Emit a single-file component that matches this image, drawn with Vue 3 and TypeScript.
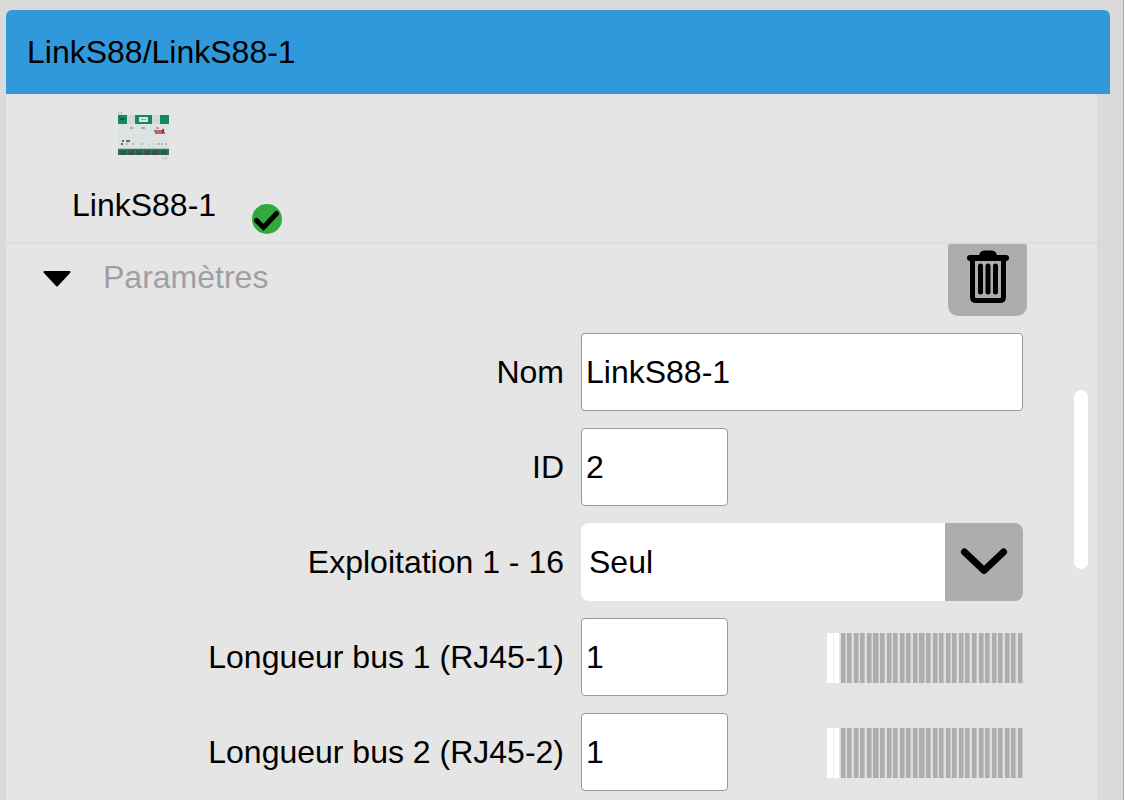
<script setup lang="ts">
import { ref } from 'vue'

interface BusLength {
  id: string
  label: string
  value: number
}

const deviceName = ref('LinkS88-1')
const deviceId = ref('2')
const mode = ref('Seul')
const open = ref(true)
const buses = ref<BusLength[]>([
  { id: 'bus1', label: 'Longueur bus 1 (RJ45-1)', value: 1 },
  { id: 'bus2', label: 'Longueur bus 2 (RJ45-2)', value: 1 },
])
</script>

<template>
  <main class="page">
    <header class="title">
      <h1>LinkS88/LinkS88-1</h1>
    </header>
    <div class="panel">
      <section class="device">
        <svg class="module" viewBox="0 0 52 50" aria-hidden="true">
          <path d="M1.500 5V2h3v3M45.500 46v2.500h4V46" fill="none" stroke="#b9c2c0" />
          <rect x="1" y="5" width="51" height="10" fill="#d4d8d8" />
          <rect x="1" y="5" width="9" height="10" fill="#128a5c" />
          <rect x="3" y="8" width="5" height="2" fill="#075f3f" />
          <rect x="18" y="5" width="17" height="9" fill="#128a5c" />
          <rect x="22" y="7" width="9" height="5" fill="#dce5e2" />
          <rect x="24" y="9" width="5" height="1" fill="#8fa39c" />
          <rect x="43" y="5" width="9" height="10" fill="#128a5c" />
          <rect x="1" y="14" width="51" height="25" fill="#dde2e3" />
          <path d="M13 18h3M24 18h4M39 18h3" stroke="#6d7678" />
          <path d="M37 21h8M38 23h10" stroke="#b83a3a" stroke-width="1.500" />
          <path d="M46 19v4" stroke="#a32626" stroke-width="2" />
          <path d="M5 31h2M9 31h4M4 34h2" stroke="#3d4648" stroke-width="1.5" />
          <path d="M9 34h2M15 34h2M24 34h2M32 34h1M36 34h1M40 34h3M44 34h2M48 34h2" stroke="#8b9496" />
          <rect x="1" y="39" width="51" height="6" fill="#3f4f4b" />
          <path d="M1 39.500h51" stroke="#128a5c" stroke-width="1.500" />
          <path d="M2 39v6M10 39v6M18 39v6M26 39v6M34 39v6M43 39v6M51 39v6" stroke="#128a5c" stroke-width="1.5" />
        </svg>
        <span class="device-name">LinkS88-1</span>
        <svg class="status" viewBox="0 0 30 30" role="img" aria-label="OK">
          <circle cx="15" cy="15" r="15" fill="#31aa3b" />
          <path d="M4.5 16.500l7 7L24.500 9.500" fill="none" stroke="#000" stroke-width="5" stroke-linecap="round" />
        </svg>
      </section>

      <div class="section-head">
        <button class="toggle" type="button" :aria-expanded="open" @click="open = !open">
          <svg class="caret" viewBox="0 0 28 20" aria-hidden="true">
            <path d="M1.5 5h25L14 18.500z" stroke="#000" stroke-linejoin="round" stroke-width="2" />
          </svg>
          <span>Paramètres</span>
        </button>
        <button class="delete" type="button" aria-label="Supprimer">
          <svg viewBox="0 0 44 54" aria-hidden="true">
            <path d="M4 8h36" stroke="#000" stroke-width="6" stroke-linecap="round" />
            <path d="M13 7c0-4 2-6.500 5-6.500h8c3 0 5 2.500 5 6.500z" />
            <path d="M6.500 9v38q0 3.500 3.500 3.500h24q3.500 0 3.500-3.500V9" fill="none" stroke="#000" stroke-width="5" />
            <path d="M14.500 16v26M22 16v26M29.500 16v26" stroke="#000" stroke-width="5" stroke-linecap="round" />
          </svg>
        </button>
      </div>

      <form v-if="open" class="form" @submit.prevent>
        <label for="name">Nom</label>
        <input id="name" v-model="deviceName" class="field" type="text" />

        <label for="ident">ID</label>
        <input id="ident" v-model="deviceId" class="field short" type="text" inputmode="numeric" />

        <label for="mode">Exploitation 1 - 16</label>
        <div class="picker">
          <select id="mode" v-model="mode">
            <option>Seul</option>
          </select>
          <span class="arrow">
            <svg viewBox="0 0 48 28" aria-hidden="true">
              <path d="M4.500 4L24 22.500 43.500 4" fill="none" stroke="#000" stroke-width="7" stroke-linecap="round" stroke-linejoin="round" />
            </svg>
          </span>
        </div>

        <template v-for="bus in buses" :key="bus.id">
          <label :for="bus.id">{{ bus.label }}</label>
          <div class="bus">
            <input :id="bus.id" v-model.number="bus.value" class="field short" type="text" inputmode="numeric" />
            <input v-model.number="bus.value" class="slider" type="range" min="1" max="30" :aria-label="bus.label" />
          </div>
        </template>
      </form>
      <div class="scroll-thumb"></div>
    </div>
  </main>
</template>

<style>
body {
  margin: 0;
  background: #dadada;
}
</style>

<style scoped>
.page {
  box-sizing: border-box;
  min-height: 100vh;
  display: flex;
  flex-direction: column;
  padding: 10px 13px 0 6px;
  border-right: 1px solid #aaa;
  background: #dadada;
  color: #000;
  font: 32px/36px "Liberation Sans", Arial, sans-serif;
}

.title {
  display: flex;
  align-items: center;
  height: 84px;
  padding-left: 21px;
  border-radius: 6px 6px 0 0;
  background: #3099db;
}

h1 {
  margin: 0;
  font: inherit;
}

.panel {
  position: relative;
  flex: 1;
  margin-right: 13px;
  background: #e5e5e5;
}

.device {
  display: grid;
  grid-template-columns: 144px 30px;
  column-gap: 36px;
  row-gap: 27px;
  padding: 16px 0 8px 66px;
  border-bottom: 2px solid #dcdcdc;
}

.module {
  grid-column: 1 / -1;
  width: 52px;
  height: 50px;
  margin-left: 45px;
}

.device-name {
  height: 47px;
  white-space: nowrap;
}

.status {
  align-self: end;
  width: 30px;
  height: 30px;
}

button {
  padding: 0;
  border: 0;
  font: inherit;
}

.section-head {
  display: flex;
  justify-content: space-between;
  align-items: flex-start;
  padding: 0 70px 0 37px;
}

.toggle {
  display: flex;
  align-items: center;
  gap: 32px;
  height: 66px;
  background: none;
  color: #9f9fa2;
}

.caret {
  width: 28px;
  height: 20px;
}

.delete {
  display: flex;
  justify-content: center;
  width: 79px;
  height: 72px;
  padding-top: 6px;
  border-radius: 2px 2px 10px 10px;
  background: #adadad;
}

.delete svg {
  width: 44px;
  height: 54px;
}

.form {
  display: grid;
  grid-template-columns: 1fr 442px;
  gap: 17px;
  align-items: center;
  padding: 17px 74px 9px 0;
}

label {
  text-align: right;
}

.field {
  box-sizing: border-box;
  width: 100%;
  height: 78px;
  padding: 0 4px;
  border: 1px solid #999;
  border-radius: 4px;
  background: #fff;
  color: #000;
  font: inherit;
}

.short {
  width: 147px;
}

.picker {
  position: relative;
  display: flex;
  height: 78px;
  overflow: hidden;
  border-radius: 8px;
}

select {
  width: 100%;
  padding: 0 86px 0 8px;
  border: 0;
  appearance: none;
  background: #fff;
  color: #000;
  font: inherit;
}

.arrow {
  position: absolute;
  inset: 0 0 0 auto;
  display: flex;
  align-items: center;
  justify-content: center;
  width: 78px;
  background: #adadad;
  pointer-events: none;
}

.arrow svg {
  width: 48px;
  height: 28px;
}

.bus {
  display: flex;
  align-items: center;
  justify-content: space-between;
}

.slider {
  width: 196px;
  height: 50px;
  margin: 2px 0 0;
  appearance: none;
  background: repeating-linear-gradient(to left, #c4c4c4 0 0.5%, #adadad 0.5% 2.6%, #dedede 2.6% 3.35%);
}

.slider::-webkit-slider-thumb {
  appearance: none;
  width: 13px;
  height: 50px;
  background: linear-gradient(to right, #fff 6px, #ebebeb 6px 7px, #fff 7px 12px, #e8e8e8 12px);
}

.scroll-thumb {
  position: absolute;
  top: 296px;
  right: 9px;
  width: 14px;
  height: 179px;
  border-radius: 7px;
  background: #fff;
}
</style>
